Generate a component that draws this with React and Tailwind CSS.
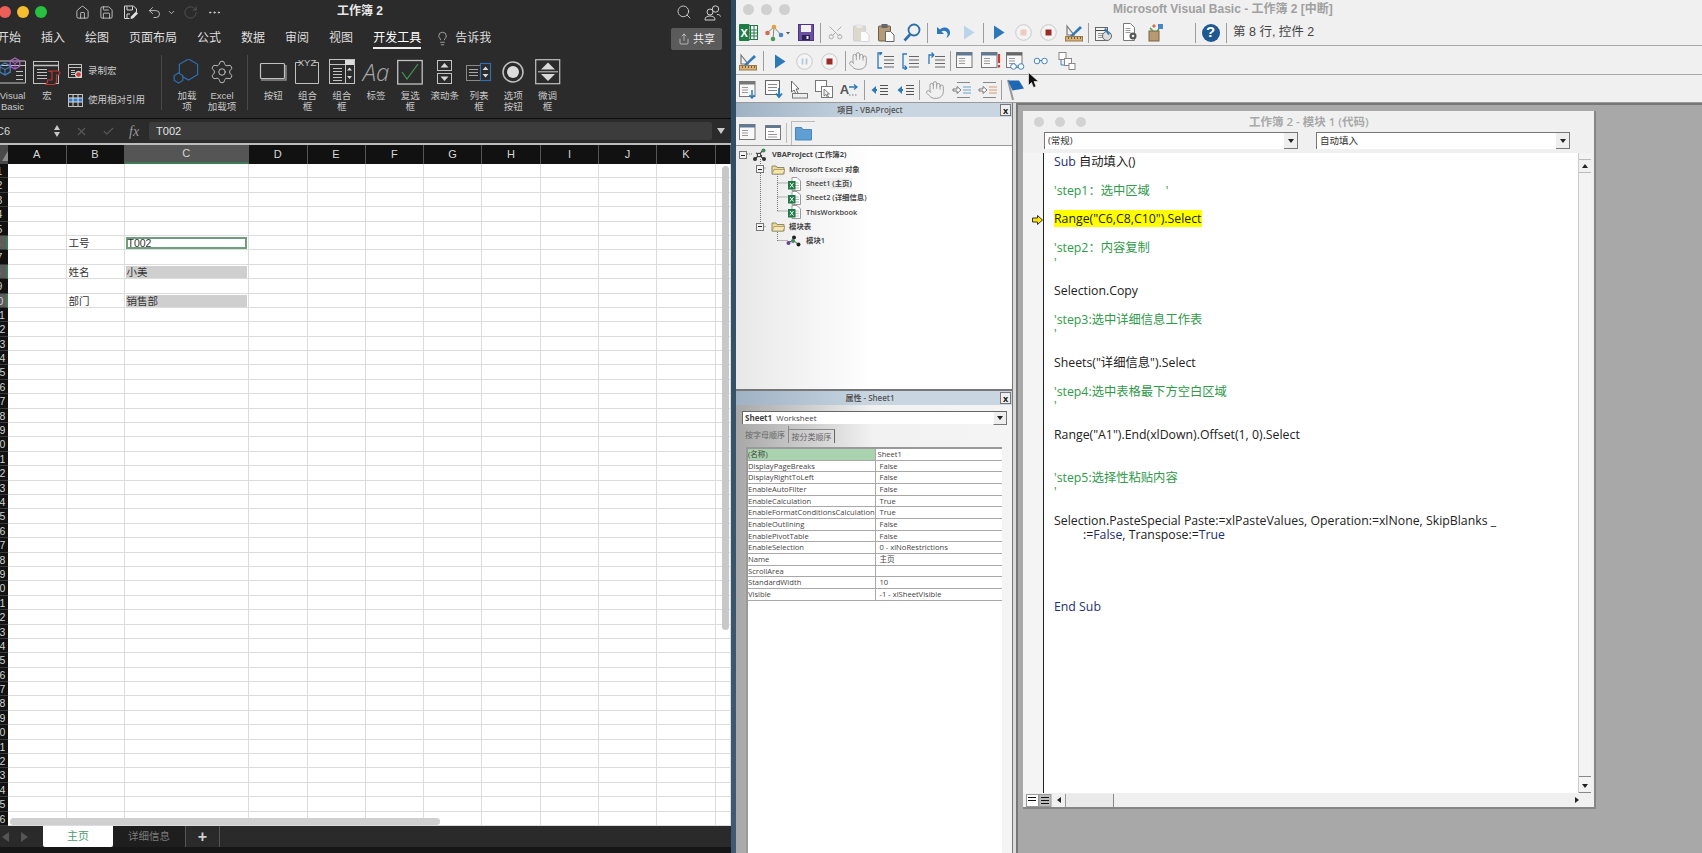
import React from "react";
import {
  Home,
  Save,
  Undo2,
  ChevronDown,
  RotateCw,
  Ellipsis,
  Search,
  Lightbulb,
  Share,
  X,
  Check,
  Settings,
  Scissors,
  Hand,
} from "lucide-react";

const sans = "font-['Liberation_Sans','Noto_Sans_CJK_SC',sans-serif]";
const ui = "font-['Open_Sans','Noto_Sans_CJK_SC',sans-serif]";

const Sv = ({ w, h, children, className }) => (
  <svg width={w} height={h} viewBox={`0 0 ${w} ${h}`} fill="none" className={className}>
    {children}
  </svg>
);

const hex = (cx, cy, r) =>
  [0, 1, 2, 3, 4, 5]
    .map((i) => {
      const a = (Math.PI / 3) * i - Math.PI / 2;
      return `${(cx + r * Math.cos(a)).toFixed(1)},${(cy + r * Math.sin(a)).toFixed(1)}`;
    })
    .join(" ");

const Lines = ({ x, y, w, n, gap, stroke = "#555" }) =>
  Array.from({ length: n }).map((_, i) => (
    <path key={i} d={`M${x} ${y + i * gap + 0.5}h${w}`} stroke={stroke} />
  ));

/* ribbon icons */
const line = "#c2c2c2";

const VbIcon = () => (
  <Sv w={27} h={26} className="overflow-visible">
    <path d="M0 2H25.5V24H0" stroke={line} />
    <path d="M0 6.5H25" stroke={line} />
    <Lines x={16} y={12} w={7} n={3} gap={4} stroke={line} />
    <polygon points={hex(5, 10, 6)} stroke="#3f86c7" strokeWidth="1.3" />
    <path d="M0 8l5 2.5 5-2.5M5 10.5V16" stroke="#3f86c7" />
    <polygon points={hex(15, 4.5, 5.5)} stroke="#b060c8" strokeWidth="1.3" />
    <path d="M10.5 2l4.5 2.5 4.5-2.5M15 4.5V10" stroke="#b060c8" />
  </Sv>
);

const MacroIcon = () => (
  <Sv w={30} h={26}>
    <rect x="1.5" y="2.5" width="25" height="22" stroke={line} />
    <path d="M2 6.5H26" stroke={line} strokeWidth="1.5" />
    <Lines x={5} y={10} w={10} n={4} gap={3} stroke={line} />
    <path d="M16 12h10.5l1.5 2-1.5 2h-2v7l-2 2.5H14l1.5-2.5v-2H20v-8z" fill="#2a2a2a" stroke="#c0342e" strokeWidth="1.2" />
  </Sv>
);

const RecordIcon = () => (
  <Sv w={15} h={15}>
    <rect x="0.5" y="0.5" width="13" height="13" stroke={line} />
    <path d="M1 3.5h12" stroke={line} />
    <Lines x={3} y={6} w={4} n={3} gap={2} stroke={line} />
    <circle cx="10.5" cy="10.5" r="3.5" fill="#d8d8d8" />
    <circle cx="10.5" cy="10.5" r="2.3" fill="#d03a32" />
  </Sv>
);

const RelIcon = () => (
  <Sv w={15} h={13}>
    <rect x="0.5" y="0.5" width="14" height="12" stroke={line} />
    <rect x="1" y="4" width="13" height="4" fill="#2f7fd0" />
    <path d="M5 1v11M10 1v11M1 4h13M1 8h13" stroke="#dcdcdc" />
  </Sv>
);

const AddinIcon = () => (
  <Sv w={28} h={26}>
    <polygon points={hex(15.5, 10.5, 10.5)} stroke="#2f6fb0" strokeWidth="1.2" />
    <polygon points={hex(5.5, 19, 5)} stroke="#2f6fb0" strokeWidth="1.2" fill="#2a2a2a" />
  </Sv>
);

const ButtonIcon = () => (
  <Sv w={28} h={20}>
    <rect x="1.5" y="1.5" width="24" height="15" rx="1" stroke={line} strokeWidth="1.2" />
    <path d="M2 18h25V3" stroke="#8a8a8a" strokeWidth="1.5" />
  </Sv>
);

const GroupIcon = () => (
  <Sv w={26} h={26}>
    <path d="M7 3.5H1.5V24.5H24.5V3.5H20" stroke={line} />
    <text x="13" y="7" textAnchor="middle" fontSize="9.5" fill={line} className={sans}>
      XYZ
    </text>
  </Sv>
);

const ComboIcon = () => (
  <Sv w={26} h={26}>
    <rect x="0.5" y="0.5" width="25" height="24" stroke={line} />
    <path d="M1 5.5h24" stroke={line} />
    <rect x="16" y="1" width="9" height="5" fill="#dcdcdc" />
    <Lines x={4} y={9} w={9} n={5} gap={3} stroke={line} />
    <path d="M16.5 6v18" stroke={line} />
    <path d="M18 11.5l2.5-3 2.5 3zM18 17l2.5 3 2.5-3z" fill="#d8d8d8" />
  </Sv>
);

const CheckIcon = () => (
  <Sv w={26} h={26}>
    <rect x="0.7" y="1.5" width="24.5" height="23.5" stroke={line} strokeWidth="1.3" />
    <path d="M5 13l5 7L21 5" stroke="#3f9a5a" strokeWidth="1.2" />
  </Sv>
);

const ScrollIcon = () => (
  <Sv w={16} h={26}>
    <rect x="0.5" y="1.5" width="14" height="10" stroke={line} />
    <path d="M3.5 8.5l4-4.5 4 4.5z" fill="#d8d8d8" />
    <rect x="0.5" y="14.5" width="14" height="10" stroke={line} />
    <path d="M3.5 17.5l4 4.5 4-4.5z" fill="#d8d8d8" />
  </Sv>
);

const ListIcon = () => (
  <Sv w={26} h={20}>
    <rect x="0.5" y="3.5" width="14" height="15" stroke="#8a8a8a" />
    <Lines x={3} y={7} w={9} n={3} gap={3} stroke="#a8a8a8" />
    <rect x="14.5" y="1.5" width="10" height="17" stroke="#2f6fb0" strokeWidth="1.2" />
    <path d="M16.5 8l3-3.5 3 3.5zM16.5 12l3 3.5 3-3.5z" fill="#d8d8d8" />
  </Sv>
);

const RadioIcon = () => (
  <Sv w={26} h={26}>
    <circle cx="13" cy="13" r="10" stroke={line} strokeWidth="1.5" />
    <circle cx="13" cy="13" r="6" fill="#dcdcdc" />
  </Sv>
);

const SpinIcon = () => (
  <Sv w={26} h={26}>
    <rect x="0.7" y="0.7" width="24" height="24" stroke={line} strokeWidth="1.2" />
    <path d="M6 10.5l7-7 7 7z" fill="#d8d8d8" />
    <path d="M6 15l7 7 7-7z" fill="#d8d8d8" />
    <path d="M3 12.7h20" stroke="#999" strokeWidth="1.5" />
  </Sv>
);

const People = () => (
  <Sv w={17} h={17}>
    <circle cx="11.5" cy="5" r="3.2" stroke="#cfcfcf" />
    <path d="M13 10.5c2 0 3.5.8 3.5 2" stroke="#cfcfcf" />
    <circle cx="6" cy="8" r="3" stroke="#cfcfcf" fill="#2b2b2b" />
    <path d="M1 16c0-3 2-4 5-4s5 1 5 4z" stroke="#cfcfcf" fill="#2b2b2b" />
  </Sv>
);

const SaveEdit = () => (
  <Sv w={15} h={15}>
    <path d="M1.5 1h9l3 3v3M1.5 1v12.5h5" stroke="#d8d8d8" />
    <path d="M4 1.5v3.5h5.5v-3.5M4 13v-4h3" stroke="#d8d8d8" />
    <path d="M7.5 14l.5-2.5 5-5 2 2-5 5z" fill="#e0e0e0" />
  </Sv>
);

const RibbonItem = ({ className, icon, children }) => (
  <div className={`flex shrink-0 flex-col items-center ${className}`}>
    <div className="flex h-[26px] items-center justify-center">{icon}</div>
    <div className="mt-[5px] whitespace-nowrap text-center text-[9.5px] leading-[11px] text-[#c8c8c8]">
      {children}
    </div>
  </div>
);

const colWidths = [
  "w-[58.5px]",
  "w-[58px]",
  "w-[124.5px]",
  "w-[58.5px]",
  "w-[58px]",
  "w-[58.5px]",
  "w-[58px]",
  "w-[59px]",
  "w-[58px]",
  "w-[58px]",
  "w-[59px]",
  "w-[15px]",
];
const letters = ["A", "B", "C", "D", "E", "F", "G", "H", "I", "J", "K", ""];
const rows = Array.from({ length: 46 }, (_, i) => i + 1);
const labels = { 6: "工号", 8: "姓名", 10: "部门" };
const values = { 8: "小美", 10: "销售部" };

const ExcelWindow = () => (
  <div className={`relative flex h-full w-[731px] shrink-0 flex-col overflow-hidden bg-[#2b2b2b] ${sans}`}>
    {/* title bar */}
    <div className="flex h-[24px] shrink-0 items-center">
      <div className="flex w-[230px] items-center text-[#d8d8d8]">
        <div className="ml-[-1px] flex gap-[6px]">
          <div className="h-[12px] w-[12px] rounded-full bg-[#ee5f57]" />
          <div className="h-[12px] w-[12px] rounded-full bg-[#f5bd2f]" />
          <div className="h-[12px] w-[12px] rounded-full bg-[#27c03f]" />
        </div>
        <Home size={15} strokeWidth={1.3} className="ml-[28px]" />
        <Save size={15} strokeWidth={1.3} className="ml-[9px]" />
        <div className="ml-[9px] flex"><SaveEdit /></div>
        <Undo2 size={15} strokeWidth={1.3} className="ml-[9px]" />
        <ChevronDown size={9} strokeWidth={2} className="ml-[5px]" />
        <RotateCw size={15} strokeWidth={1} className="ml-[7px] text-[#666]" />
        <Ellipsis size={15} strokeWidth={1.5} className="ml-[9px]" />
      </div>
      <div className="mt-[-2px] w-[260px] text-center text-[12px] font-bold text-[#e8e8e8]">工作簿 2</div>
      <div className="flex flex-1 items-center justify-end gap-[12px] pr-[10px] text-[#d8d8d8]">
        <Search size={16} strokeWidth={1.3} />
        <People />
      </div>
    </div>
    {/* tabs */}
    <div className="flex h-[30px] shrink-0 items-start pt-[6px] text-[12px] leading-[17px] text-[#dedede]">
      <div className="ml-[-3px] flex items-start gap-[20px]">
        <span>开始</span>
        <span>插入</span>
        <span>绘图</span>
        <span>页面布局</span>
        <span>公式</span>
        <span>数据</span>
        <span>审阅</span>
        <span>视图</span>
        <span className="border-b-2 border-[#eeeeee] text-white">开发工具</span>
      </div>
      <Lightbulb size={15} strokeWidth={1} className="ml-[14px] mt-[1px]" />
      <span className="ml-[5px]">告诉我</span>
      <div className="ml-auto mr-[9px] mt-[-2px] flex h-[22px] w-[51px] items-center justify-center gap-[3px] rounded-[2px] bg-[#5b5b5b] text-[11px] text-[#eeeeee]">
        <Share size={12} strokeWidth={1.2} />
        共享
      </div>
    </div>
    {/* ribbon */}
    <div className="flex h-[64px] shrink-0 items-start pt-[5px]">
      <RibbonItem className="w-[26px]" icon={<VbIcon />}>
        <span className="ml-[-1px] block">Visual<br />Basic</span>
      </RibbonItem>
      <RibbonItem className="w-[42px]" icon={<MacroIcon />}>宏</RibbonItem>
      <div className="flex w-[93px] shrink-0 flex-col text-[9.5px] text-[#c8c8c8]">
        <div className="mt-[4px] flex h-[16px] items-center gap-[5px]"><RecordIcon />录制宏</div>
        <div className="mt-[13px] flex h-[16px] items-center gap-[5px]"><RelIcon />使用相对引用</div>
      </div>
      <div className="mt-[-4px] h-[55px] w-px shrink-0 bg-[#484848]" />
      <RibbonItem className="ml-[5px] w-[40px]" icon={<AddinIcon />}>加载<br />项</RibbonItem>
      <RibbonItem
        className="w-[30px]"
        icon={<Settings size={26} strokeWidth={0.9} className="text-[#c2c2c2]" />}
      >
        Excel<br />加载项
      </RibbonItem>
      <div className="ml-[10px] mt-[-4px] h-[55px] w-px shrink-0 bg-[#484848]" />
      <div className="ml-[8px] flex">
        <RibbonItem className="w-[34.3px]" icon={<ButtonIcon />}>按钮</RibbonItem>
        <RibbonItem className="w-[34.3px]" icon={<GroupIcon />}>组合<br />框</RibbonItem>
        <RibbonItem className="w-[34.3px]" icon={<ComboIcon />}>组合<br />框</RibbonItem>
        <RibbonItem
          className="w-[34.3px]"
          icon={<span className={`text-[24px] font-light italic leading-none text-[#a8a8a8] ${ui}`}>Aa</span>}
        >
          标签
        </RibbonItem>
        <RibbonItem className="w-[34.3px]" icon={<CheckIcon />}>复选<br />框</RibbonItem>
        <RibbonItem className="w-[34.3px]" icon={<ScrollIcon />}>滚动条</RibbonItem>
        <RibbonItem className="w-[34.3px]" icon={<ListIcon />}>列表<br />框</RibbonItem>
        <RibbonItem className="w-[34.3px]" icon={<RadioIcon />}>选项<br />按钮</RibbonItem>
        <RibbonItem className="w-[34.3px]" icon={<SpinIcon />}>微调<br />框</RibbonItem>
      </div>
    </div>
    {/* formula bar */}
    <div className="flex h-[25px] shrink-0 items-center border-t border-[#0c0c0c] text-[#d8d8d8]">
      <span className="w-[52px] text-[11px]">
        <span className="ml-[-4px] block">C6</span>
      </span>
      <div className="flex w-[10px] flex-col items-center gap-[2px] text-[#c8c8c8]">
        <div className="h-0 w-0 border-x-[3.5px] border-b-[5px] border-x-transparent border-b-[#c8c8c8]" />
        <div className="h-0 w-0 border-x-[3.5px] border-t-[5px] border-x-transparent border-t-[#c8c8c8]" />
      </div>
      <X size={13} strokeWidth={2} className="ml-[13px] text-[#5a5a5a]" />
      <Check size={13} strokeWidth={2} className="ml-[14px] text-[#5a5a5a]" />
      <span className="ml-[14px] font-['Liberation_Serif',serif] text-[14px] italic text-[#9a9a9a]">fx</span>
      <div className="ml-[10px] flex h-[18px] w-[563px] items-center rounded-[2px] bg-[#3c3c3c] pl-[7px] text-[11px] text-[#e4e4e4]">
        T002
      </div>
      <div className="ml-[5px] h-0 w-0 border-x-[4px] border-t-[6px] border-x-transparent border-t-[#c8c8c8]" />
    </div>
    <div className="h-[2px] shrink-0 bg-[#bdbdbd]" />
    {/* column headers */}
    <div className="flex h-[19px] shrink-0 bg-[#111111]">
      <div className="relative w-[8px] shrink-0 bg-[#4a4a4a]">
        <div className="ml-[2px] mt-[6px] h-0 w-0 border-b-[10px] border-l-[6px] border-b-[#8a8a8a] border-l-transparent" />
      </div>
      {letters.map((l, i) => (
        <div
          key={i}
          className={`flex shrink-0 items-center justify-center border-r border-[#555] text-[11px] text-[#d8d8d8] ${colWidths[i]} ${
            l === "C" ? "border-b-2 border-b-[#3f7a58] bg-[#555555]" : ""
          }`}
        >
          {l}
        </div>
      ))}
    </div>
    {/* sheet */}
    <div className="relative h-[662px] shrink-0 overflow-hidden bg-white">
      {rows.map((r) => (
        <div key={r} className="flex h-[14.4px]">
          <div
            className={`flex w-[8px] shrink-0 justify-end overflow-hidden border-b border-[#3a3a3a] text-[10.5px] leading-[14px] text-[#d0d0d0] ${
              labels[r] ? "border-r-2 border-r-[#3f7a58] bg-[#5c5c5c]" : "bg-[#111111]"
            }`}
          >
            <span className="w-[17px] shrink-0 text-center">{r}</span>
          </div>
          {colWidths.map((w, i) => (
            <div
              key={i}
              className={`shrink-0 overflow-hidden border-b border-r border-[#dcdcdc] text-[10.5px] leading-[12px] text-[#333] ${w}`}
            >
              {i === 1 && labels[r] && <span className="ml-[2px] mt-[1.5px] block">{labels[r]}</span>}
              {i === 2 && r === 6 && (
                <div className="mx-[1px] mt-[1.5px] h-[12px] border-2 border-[#6f9d80] leading-[9px]">T002</div>
              )}
              {i === 2 && values[r] && (
                <div className="mx-[1px] mt-[1.5px] h-[12px] bg-[#cfcfcf] pl-[1px]">{values[r]}</div>
              )}
            </div>
          ))}
        </div>
      ))}
      <div className="absolute left-[722px] top-[2px] h-[464px] w-[7px] rounded-full bg-[#c8c8c8]" />
      <div className="absolute bottom-[1px] left-[10px] h-[7px] w-[430px] rounded-full bg-[#cfcfcf]" />
    </div>
    {/* sheet tabs */}
    <div className="flex h-[21px] shrink-0 items-center bg-[#2a2a2a]">
      <div className="ml-[2px] h-0 w-0 border-y-[5px] border-r-[7px] border-y-transparent border-r-[#555]" />
      <div className="ml-[12px] h-0 w-0 border-y-[5px] border-l-[7px] border-y-transparent border-l-[#555]" />
      <div className="ml-[15px] flex h-full w-[70px] items-center justify-center rounded-b-[2px] bg-white text-[11px] text-[#4f9a6c]">
        主页
      </div>
      <div className="flex h-full w-[73px] items-center justify-center border-r border-[#555] bg-[#1e1e1e] text-[10.5px] text-[#7c7c7c]">
        详细信息
      </div>
      <div className="flex h-full w-[34px] items-center justify-center border-r border-[#555] text-[16px] font-bold text-[#cfcfcf]">
        +
      </div>
    </div>
    <div className="flex-1 bg-[#161616]" />
  </div>
);

/* VBA toolbar icons */
const XlIcon = () => (
  <Sv w={19} h={17}>
    <rect x="8" y="1.5" width="10.5" height="14" fill="#fff" stroke="#1f7a45" />
    <path d="M11.5 2v13M15 2v13M8 6h10M8 9h10M8 12h10" stroke="#1f7a45" />
    <rect x="0" y="0" width="10.5" height="17" rx="1" fill="#1f7a45" />
    <text x="5.2" y="12.5" textAnchor="middle" fontSize="11" fontWeight="700" fill="#fff" className={sans}>
      X
    </text>
  </Sv>
);
const NodesIcon = () => (
  <Sv w={26} h={18}>
    <path d="M3 9l7-6 7 8M10 3l-1 12" stroke="#888" />
    <circle cx="3.5" cy="9" r="2.3" fill="#d9694f" />
    <circle cx="10" cy="3" r="2.3" fill="#e3a33a" />
    <circle cx="9" cy="15" r="2.3" fill="#4d9a58" />
    <circle cx="17" cy="11" r="2.3" fill="#4a86c4" />
    <path d="M22 8h4l-2 2.5z" fill="#555" />
  </Sv>
);
const FloppyIcon = () => (
  <Sv w={16} h={17}>
    <rect x="0.5" y="0.5" width="15" height="16" fill="#6a4fa3" stroke="#4b3580" />
    <rect x="3" y="1" width="10" height="7" fill="#f2f2f2" />
    <rect x="4" y="11" width="8" height="5" fill="#2d2250" />
    <rect x="8.5" y="12" width="2" height="3" fill="#eee" />
  </Sv>
);
const PasteIcon = ({ dim }) => (
  <Sv w={17} h={19}>
    <rect x="0.5" y="3" width="12" height="15" rx="1" fill={dim ? "#ddd8cd" : "#b49a78"} stroke={dim ? "#cfcfcf" : "#6f5f48"} />
    <rect x="3.5" y="1" width="6" height="4" fill={dim ? "#e8e8e8" : "#666"} />
    <path d="M7.5 8.5h5l3.5 3.5v6.5h-8.5z" fill="#fbfbfb" stroke={dim ? "#d8d8d8" : "#666"} />
  </Sv>
);
const FindIcon = () => (
  <Sv w={18} h={19}>
    <circle cx="11" cy="7" r="5.5" stroke="#2b6ea8" strokeWidth="1.8" />
    <path d="M7 11.5L1.5 17.5" stroke="#2b6ea8" strokeWidth="2.6" />
  </Sv>
);
const UndoIcon = () => (
  <Sv w={17} h={15}>
    <path d="M2 2v7h7l-2.5-2.5c2-1.5 5-1 6 2 .3 1.2 0 3-1.5 4.5 3-1 4.5-3.5 4-6C14.5 2.5 9 1 5 4.5z" fill="#2d78b8" />
  </Sv>
);
const Tri = ({ color }) => (
  <Sv w={12} h={15}>
    <path d="M1 0.5l10.5 7-10.5 7z" fill={color} />
  </Sv>
);
const Circle = ({ children }) => (
  <Sv w={17} h={17}>
    <circle cx="8.5" cy="8.5" r="7.8" fill="#f4f4f4" stroke="#c8c8c8" />
    {children}
  </Sv>
);
const DesignIcon = () => (
  <Sv w={19} h={19}>
    <path d="M2 3l7 9H2z" fill="none" stroke="#777" strokeWidth="1.2" />
    <path d="M5 13L15 3l2 2L7 14z" fill="#2d78b8" />
    <rect x="0.5" y="13.5" width="17" height="4.5" fill="#d9b27a" stroke="#9a7b4c" />
    <path d="M3.5 14v2M6.5 14v2M9.5 14v2M12.5 14v2M15.5 14v2" stroke="#7a5e36" />
  </Sv>
);
const WizardIcon = () => (
  <Sv w={18} h={18}>
    <rect x="0.5" y="3.5" width="12" height="13" fill="#f4f4f4" stroke="#666" />
    <path d="M1 6.5h11" stroke="#444" />
    <Lines x={3} y={9} w={6} n={3} gap={2} stroke="#999" />
    <circle cx="12" cy="12" r="4.5" fill="#ddd" stroke="#666" />
    <path d="M10 4.5l4 6" stroke="#2d78b8" strokeWidth="2" />
  </Sv>
);
const GearDocIcon = () => (
  <Sv w={17} h={19}>
    <path d="M1.5 0.5h7l4 4v13h-11z" fill="#fff" stroke="#777" />
    <Lines x={3.5} y={5} w={5} n={3} gap={2} stroke="#999" />
    <circle cx="11" cy="13" r="3.5" fill="#555" />
    <circle cx="11" cy="13" r="1.3" fill="#eee" />
  </Sv>
);
const ToolboxIcon = () => (
  <Sv w={18} h={19}>
    <rect x="2" y="8" width="10" height="10" fill="#b59a72" stroke="#7a6543" />
    <path d="M7 1l2 2-2 2-2-2z" fill="#d9694f" />
    <rect x="11" y="1" width="5" height="5" fill="#4a86c4" />
    <path d="M3 5l3 3M12 6l-2 2" stroke="#4d9a58" strokeWidth="1.5" />
  </Sv>
);
const HelpIcon = () => (
  <div className="flex h-[18px] w-[18px] items-center justify-center rounded-full bg-[#20598f] font-['Liberation_Sans',sans-serif] text-[15px] font-bold text-white">
    ?
  </div>
);
const Stop = ({ color }) => (
  <Circle>
    <rect x="5.5" y="5.5" width="6" height="6" fill={color} />
  </Circle>
);
const StepIcon = ({ d }) => (
  <Sv w={19} h={18}>
    <Lines x={8} y={4} w={10} n={4} gap={3.5} stroke="#666" />
    <path d={d} stroke="#2d78b8" strokeWidth="1.3" />
  </Sv>
);
const WinIcon = ({ extra, title = "#5a7a98" }) => (
  <Sv w={20} h={18}>
    <rect x="0.5" y="0.5" width="15.5" height="15" fill="#f8f8f8" stroke="#777" />
    <rect x="1" y="1" width="15" height="2.5" fill={title} />
    <Lines x={3} y={6} w={6} n={3} gap={2.5} stroke="#999" />
    {extra}
  </Sv>
);
const Glasses = ({ x = 0, y = 0, c = "#3f86c0" }) => (
  <g transform={`translate(${x} ${y})`}>
    <circle cx="3.5" cy="3.5" r="2.8" fill="#fff" stroke={c} />
    <circle cx="11" cy="3.5" r="2.8" fill="#fff" stroke={c} />
    <path d="M6 3h2.5" stroke={c} />
  </g>
);
const StackIcon = () => (
  <Sv w={18} h={18}>
    <rect x="1" y="0.5" width="7" height="7" fill="#fff" stroke="#888" />
    <rect x="6.5" y="6.5" width="7" height="7" fill="#fff" stroke="#888" />
    <rect x="11" y="11.5" width="6" height="6" fill="#fff" stroke="#888" />
    <path d="M3 8v5h3" stroke="#3f86c0" />
  </Sv>
);
const DocArrow = () => (
  <Sv w={19} h={19}>
    <rect x="0.5" y="0.5" width="14" height="14" fill="#fafafa" stroke="#666" />
    <Lines x={3} y={4} w={9} n={3} gap={3} stroke="#888" />
    <path d="M14 8v8M11 13.5l3 3.5 3-3.5" stroke="#2d78b8" strokeWidth="1.8" />
  </Sv>
);
const ArrowBox = () => (
  <Sv w={19} h={19}>
    <path d="M1.5 1v11l2.5-2 2 4 2-1-2-4h3z" fill="#fff" stroke="#666" />
    <rect x="2.5" y="13.5" width="15" height="4.5" fill="#eee" stroke="#777" />
  </Sv>
);
const TwoDocs = () => (
  <Sv w={19} h={19}>
    <rect x="0.5" y="0.5" width="11" height="11" fill="#fff" stroke="#777" />
    <rect x="6.5" y="6.5" width="11" height="11" fill="#fff" stroke="#777" />
    <path d="M9 9v7l2-1.5 1.5 3 1-.5-1.5-3h2.5z" fill="#eee" stroke="#555" strokeWidth="0.7" />
  </Sv>
);
const WordIcon = () => (
  <div className="flex items-center">
    <span className={`text-[13px] font-semibold leading-none text-[#555] ${sans}`}>A</span>
    <Sv w={10} h={14}>
      <path d="M0 4h7M5 1.5L8 4 5 6.5" stroke="#2d78b8" strokeWidth="1.3" />
      <path d="M0 12h9" stroke="#777" strokeDasharray="1.5 1.5" />
    </Sv>
  </div>
);
const IndentIcon = () => (
  <Sv w={17} h={14}>
    <Lines x={9} y={2} w={8} n={4} gap={3} stroke="#555" />
    <path d="M2 7h4" stroke="#2d78b8" strokeWidth="2" />
    <path d="M0.5 7L5 3v8z" fill="#2d78b8" />
  </Sv>
);
const CommentIcon = ({ c = "#6ea2d4" }) => (
  <Sv w={20} h={20}>
    <Lines x={5} y={2} w={13} n={1} gap={3} stroke="#888" />
    <path d="M1 9h4V6.5L9 10l-4 3.5V11H1z" fill="#fff" stroke="#777" />
    <path d="M11 7h8M11 10h8M11 13h8" stroke={c} />
    <Lines x={5} y={17} w={13} n={1} gap={3} stroke="#888" />
  </Sv>
);
const FlagIcon = () => (
  <Sv w={18} h={22}>
    <path d="M1 1l5 20" stroke="#999" strokeWidth="2" />
    <path d="M1 1.5h11l5 8-11.5 2z" fill="#1d68b4" />
  </Sv>
);

const Tool = ({ className, children }) => (
  <div className={`flex h-full shrink-0 items-center justify-center ${className}`}>{children}</div>
);
const Sep = ({ className }) => (
  <div className={`flex h-full shrink-0 items-center justify-center ${className}`}>
    <div className="h-[20px] w-px bg-[#9d9d9d]" />
  </div>
);
const HandTool = () => <Hand size={20} strokeWidth={1} className="text-[#8f8f8f]" />;

const Toolbars = () => (
  <div className="relative shrink-0">
    <div className="flex h-[28px] items-center border-b border-[#a9a9a9] pt-[2px]">
      <Tool className="w-[25px]"><XlIcon /></Tool>
      <Tool className="w-[32px]"><NodesIcon /></Tool>
      <Tool className="w-[25px]"><FloppyIcon /></Tool>
      <Sep className="w-[5px]" />
      <Tool className="w-[25px]"><Scissors size={17} strokeWidth={1.3} className="-rotate-90 text-[#a9a9a9]" /></Tool>
      <Tool className="w-[26px]"><PasteIcon dim /></Tool>
      <Tool className="w-[25px]"><PasteIcon /></Tool>
      <Tool className="w-[26px]"><FindIcon /></Tool>
      <Sep className="w-[4px]" />
      <Tool className="w-[28px]"><UndoIcon /></Tool>
      <Tool className="w-[23px]"><Tri color="#bcd4ea" /></Tool>
      <Sep className="w-[6px]" />
      <Tool className="w-[25px]"><Tri color="#2d78b8" /></Tool>
      <Tool className="w-[25px]"><Stop color="#eec9c4" /></Tool>
      <Tool className="w-[25px]"><Stop color="#9c2a26" /></Tool>
      <Tool className="w-[26px]"><DesignIcon /></Tool>
      <Sep className="w-[3px]" />
      <Tool className="w-[27px]"><WizardIcon /></Tool>
      <Tool className="w-[26px]"><GearDocIcon /></Tool>
      <Tool className="w-[25px]"><ToolboxIcon /></Tool>
      <Tool className="w-[25px]" />
      <Sep className="w-[4px]" />
      <Tool className="w-[27px]"><HelpIcon /></Tool>
      <Sep className="w-[4px]" />
      <span className={`ml-[5px] text-[12.5px] text-[#444] ${sans}`}>第 8 行, 控件 2</span>
    </div>
    <div className="flex h-[29px] items-center border-b border-[#a9a9a9] pt-[2px]">
      <Tool className="w-[25px]"><DesignIcon /></Tool>
      <Sep className="w-[5px]" />
      <Tool className="w-[27px]"><Tri color="#2d78b8" /></Tool>
      <Tool className="w-[22px]">
        <Circle><path d="M6.5 5.5v6M10.5 5.5v6" stroke="#b4c8dc" strokeWidth="1.8" /></Circle>
      </Tool>
      <Tool className="w-[28px]"><Stop color="#9c2a26" /></Tool>
      <Sep className="w-[4px]" />
      <Tool className="w-[22px]"><HandTool /></Tool>
      <Tool className="ml-[3px] w-[26px]"><StepIcon d="M6 1H2v15h4M6 1L3.5 3M6 1L3.5 -1" /></Tool>
      <Tool className="w-[24px]"><StepIcon d="M6 2H2v14h4M6 16l-2.5-2.5M6 16l-2.5 2" /></Tool>
      <Tool className="ml-[1px] w-[26px]"><StepIcon d="M2 12V3h5M7 3L4.5 0.5M7 3L4.5 5.5" /></Tool>
      <Sep className="w-[2px]" />
      <Tool className="w-[29px]"><WinIcon /></Tool>
      <Tool className="w-[22px]">
        <WinIcon extra={<path d="M18 2v9M18 13v2.5" stroke="#d03a32" strokeWidth="2.2" />} />
      </Tool>
      <Tool className="w-[28px]">
        <WinIcon title="#666" extra={<Glasses x={4} y={11} />} />
      </Tool>
      <Tool className="w-[21px]">
        <Sv w={16} h={8}><Glasses x={0.5} y={0.5} /></Sv>
      </Tool>
      <Tool className="w-[31px]"><StackIcon /></Tool>
    </div>
    <div className="flex h-[28px] items-center border-b border-[#9a9a9a] pt-[2px]">
      <Tool className="w-[25px]"><WinIcon title="#777" extra={<path d="M13 9v8M10.5 14l2.5 3 2.5-3" stroke="#2d78b8" strokeWidth="1.5" />} /></Tool>
      <Tool className="w-[26px]"><DocArrow /></Tool>
      <Tool className="w-[25px]"><ArrowBox /></Tool>
      <Tool className="w-[25px]"><TwoDocs /></Tool>
      <Tool className="w-[25px]"><WordIcon /></Tool>
      <Sep className="w-[4px]" />
      <Tool className="w-[27px]"><IndentIcon /></Tool>
      <Tool className="w-[25px]"><IndentIcon /></Tool>
      <Sep className="w-[3px]" />
      <Tool className="w-[28px]"><HandTool /></Tool>
      <Tool className="w-[26px]"><CommentIcon /></Tool>
      <Tool className="w-[25px]"><CommentIcon c="#d99a6e" /></Tool>
      <Sep className="w-[3px]" />
      <Tool className="w-[25px]"><FlagIcon /></Tool>
    </div>
    {/* mouse pointer */}
    <svg width="11" height="17" viewBox="0 0 11 17" className="absolute left-[292px] top-[54px]">
      <path d="M0.5 0.5v13l3-3 2 5 2.5-1-2-5h4.5z" fill="#111" stroke="#fff" strokeWidth="0.6" />
    </svg>
  </div>
);

/* project tree */
const Box = () => (
  <div className="flex h-[8px] w-[8px] shrink-0 items-center justify-center border border-[#777] bg-[#f2f2f2]">
    <div className="h-px w-[4px] bg-[#222]" />
  </div>
);
const FolderIcon = () => (
  <Sv w={14} h={11}>
    <path d="M1 10V2h4l1 1.5h7V10z" fill="#f0d98a" stroke="#8a8a70" />
    <path d="M1 10l2-4.5h11L12 10z" fill="#f7e7a8" stroke="#8a8a70" strokeWidth="0.7" />
  </Sv>
);
const SheetIcon = () => (
  <Sv w={13} h={14}>
    <path d="M4 0.5h5l3.5 3.5v9.5H4z" fill="#fff" stroke="#999" />
    <path d="M6 6h5M6 8.5h5M6 11h5" stroke="#bbb" />
    <rect x="0" y="4" width="7.5" height="8.5" fill="#1f7a45" />
    <path d="M2 6l3.5 4.5M5.5 6L2 10.5" stroke="#fff" />
  </Sv>
);
const ModuleIcon = () => (
  <Sv w={15} h={12}>
    <path d="M2 8l5-3 6 5M7 5l1-3" stroke="#555" />
    <circle cx="2.5" cy="8" r="2" fill="#6a3d9a" />
    <circle cx="8" cy="2.5" r="2" fill="#222" />
    <circle cx="7" cy="6" r="2" fill="#3d8a58" />
    <circle cx="12.5" cy="9.5" r="2" fill="#222" />
  </Sv>
);
const RootIcon = () => (
  <Sv w={16} h={14}>
    <path d="M2 12l5-5 6 5M7 7l4-5M4 5l6 3" stroke="#333" strokeWidth="1.2" />
    <circle cx="3" cy="11" r="2" fill="#333" />
    <circle cx="12" cy="11" r="2" fill="#333" />
    <circle cx="11.5" cy="2.5" r="2" fill="#3d8a58" />
    <circle cx="7" cy="7" r="1.8" fill="#eee" stroke="#333" />
  </Sv>
);

const TreeRow = ({ className, children }) => (
  <div className={`flex h-[14.3px] items-center whitespace-nowrap text-[7.4px] font-semibold leading-none text-[#444] ${className}`}>
    {children}
  </div>
);

const PanelTitle = ({ children }) => (
  <div className="flex h-[14px] shrink-0 items-center bg-linear-to-r from-[#9fb2c4] via-[#c9d6e2] to-[#c9d6e2] text-[8px] font-semibold text-[#555]">
    <span className="flex-1 pl-[4px] text-center">{children}</span>
    <div className="mr-[1px] flex h-[12px] w-[11px] items-center justify-center border border-[#777] bg-[#eee] text-[9px] font-bold leading-none text-[#222]">
      x
    </div>
  </div>
);

const Arrow = () => (
  <div className="flex h-[13px] w-[14px] shrink-0 items-center justify-center border-b border-l border-r border-[#777] border-l-[#fff] bg-[#eeeeee]">
    <div className="h-0 w-0 border-x-[3px] border-t-[4px] border-x-transparent border-t-[#222]" />
  </div>
);

const ProjectPanel = () => (
  <div className="flex h-[288px] shrink-0 flex-col border-b-2 border-[#777]">
    <PanelTitle>项目 - VBAProject</PanelTitle>
    <div className="flex h-[29px] shrink-0 items-center border-b border-[#999] bg-[#f0f0f0] pt-[3px]">
      <div className="flex w-[25px] justify-center pl-[1px]">
        <WinIcon />
      </div>
      <div className="flex w-[25px] justify-center">
        <Sv w={17} h={15}>
          <rect x="0.5" y="0.5" width="15" height="14" fill="#fff" stroke="#777" />
          <rect x="1" y="1" width="14" height="2" fill="#5a7a98" />
          <path d="M3 6.5h6M3 9.5h9M3 12h9" stroke="#999" />
        </Sv>
      </div>
      <div className="h-[20px] w-px bg-[#bbb]" />
      <div className="ml-[4px] flex h-[24px] w-[24px] items-center justify-center border-l border-t border-[#bbb]">
        <Sv w={17} h={15}>
          <path d="M0.5 14V1.5h6l1.5 2h8.5V14z" fill="#5f9fd4" stroke="#4a86bb" />
        </Sv>
      </div>
    </div>
    <div className="relative flex-1 bg-linear-to-r from-[#e8e8e8] via-white to-white pt-[2px]">
      <svg width="60" height="100" viewBox="0 0 60 100" className="absolute left-0 top-0" fill="none">
        <path d="M24.5 13v68M41.5 22v44M24.5 22H30M24.5 80.5H30M41.5 37H52M41.5 51H52M41.5 65H52M41.5 80v15M41.5 94.5H52M11 8h5" stroke="#777" strokeDasharray="1 1" />
      </svg>
      <TreeRow className="relative pl-[3px] text-[#222]">
        <Box />
        <span className="ml-[5px] flex w-[16px]"><RootIcon /></span>
        <span className="ml-[4px] font-bold">VBAProject (工作簿2)</span>
      </TreeRow>
      <TreeRow className="relative pl-[20px]">
        <Box />
        <span className="ml-[7px] flex"><FolderIcon /></span>
        <span className="ml-[4px]">Microsoft Excel 对象</span>
      </TreeRow>
      <TreeRow className="relative pl-[52px]">
        <SheetIcon />
        <span className="ml-[5px] bg-[#ededed] py-[2px]">Sheet1 (主页)</span>
      </TreeRow>
      <TreeRow className="relative pl-[52px]">
        <SheetIcon />
        <span className="ml-[5px]">Sheet2 (详细信息)</span>
      </TreeRow>
      <TreeRow className="relative pl-[52px]">
        <SheetIcon />
        <span className="ml-[5px]">ThisWorkbook</span>
      </TreeRow>
      <TreeRow className="relative pl-[20px]">
        <Box />
        <span className="ml-[7px] flex"><FolderIcon /></span>
        <span className="ml-[4px]">模块表</span>
      </TreeRow>
      <TreeRow className="relative pl-[50px]">
        <ModuleIcon />
        <span className="ml-[5px]">模块1</span>
      </TreeRow>
    </div>
  </div>
);

const props = [
  ["DisplayPageBreaks", "False"],
  ["DisplayRightToLeft", "False"],
  ["EnableAutoFilter", "False"],
  ["EnableCalculation", "True"],
  ["EnableFormatConditionsCalculation", "True"],
  ["EnableOutlining", "False"],
  ["EnablePivotTable", "False"],
  ["EnableSelection", "0 - xlNoRestrictions"],
  ["Name", "主页"],
  ["ScrollArea", ""],
  ["StandardWidth", "10"],
  ["Visible", "-1 - xlSheetVisible"],
];

const PropRow = ({ name, value }) => (
  <div className="flex h-[11.67px] border-b border-[#a8a8a8] text-[7.6px] leading-[10.5px] text-[#444]">
    <div className="w-[127.5px] shrink-0 overflow-hidden whitespace-nowrap border-r border-[#a8a8a8]">{name}</div>
    <div className="flex-1 pl-[4px]">{value}</div>
  </div>
);

const PropsPanel = () => (
  <div className="flex min-h-0 flex-1 flex-col">
    <PanelTitle>属性 - Sheet1</PanelTitle>
    <div className="flex min-h-0 flex-1 flex-col bg-linear-to-r from-[#a8a8a8] via-[#f2f2f2] to-[#f4f4f4] pl-[6px] pr-[5px]">
      <div className="mt-[6px] flex h-[13px] shrink-0 items-center justify-between border-l border-t border-[#666] bg-white pl-[2px] text-[8px] text-[#444]">
        <span>
          <b>Sheet1</b>&nbsp; Worksheet
        </span>
        <Arrow />
      </div>
      <div className="mt-[2px] flex h-[17px] shrink-0 items-end text-[8px] text-[#666]">
        <div className="flex h-[17px] w-[47px] items-center justify-center border-r border-[#888]">按字母顺序</div>
        <div className="flex h-[14px] w-[46px] items-center justify-center border-r border-t border-[#888] border-r-[#666]">按分类顺序</div>
      </div>
      <div className="ml-[4px] mr-[5px] mt-[4px] min-h-0 flex-1 border-l-2 border-t-2 border-[#9a9a9a] bg-white">
        <div className="flex h-[11.67px] border-b border-[#a8a8a8] text-[7.6px] leading-[10.5px] text-[#444]">
          <div className="w-[127.5px] shrink-0 border-r border-[#a8a8a8] bg-[#a9d3ae]">(名称)</div>
          <div className="flex-1 pl-[2px]">Sheet1</div>
        </div>
        {props.map(([n, v]) => (
          <PropRow key={n} name={n} value={v} />
        ))}
      </div>
    </div>
  </div>
);

/* code */
const navy = "text-[#1d2f6f]";
const green = "text-[#2f9a4a]";

const code = [
  <><span className={navy}>Sub</span> 自动填入()</>,
  "",
  <span className={green}>'step1：选中区域     '</span>,
  "",
  <span className="bg-[#ffff00]">Range("C6,C8,C10").Select</span>,
  "",
  <span className={green}>'step2：内容复制</span>,
  <span className={green}>'</span>,
  "",
  "Selection.Copy",
  "",
  <span className={green}>'step3:选中详细信息工作表</span>,
  <span className={green}>'</span>,
  "",
  'Sheets("详细信息").Select',
  "",
  <span className={green}>'step4:选中表格最下方空白区域</span>,
  <span className={green}>'</span>,
  "",
  'Range("A1").End(xlDown).Offset(1, 0).Select',
  "",
  "",
  <span className={green}>'step5:选择性粘贴内容</span>,
  <span className={green}>'</span>,
  "",
  "Selection.PasteSpecial Paste:=xlPasteValues, Operation:=xlNone, SkipBlanks _",
  <span className="pl-[29px]">:=<span className={navy}>False</span>, Transpose:=<span className={navy}>True</span></span>,
  "",
  "",
  "",
  "",
  <span className={navy}>End Sub</span>,
];

const Combo = ({ className, children }) => (
  <div className={`flex h-[17px] shrink-0 items-center justify-between border-l border-t border-[#777] bg-white pl-[3px] text-[9.5px] text-[#333] ${className}`}>
    {children}
    <div className="flex h-[16px] w-[14px] items-center justify-center border-b border-r border-[#777] bg-[#eeeeee]">
      <div className="h-0 w-0 border-x-[3px] border-t-[4px] border-x-transparent border-t-[#222]" />
    </div>
  </div>
);

const CodeWindow = () => (
  <div className="ml-[5px] mt-[6px] flex h-[698px] w-[573px] flex-col border-b-2 border-r-2 border-[#868686] bg-[#f0f0f0]">
    <div className="flex h-[21px] shrink-0 items-center">
      <div className="ml-[11px] flex gap-[11px]">
        <div className="h-[10px] w-[10px] rounded-full bg-[#d2d2d2]" />
        <div className="h-[10px] w-[10px] rounded-full bg-[#d2d2d2]" />
        <div className="h-[10px] w-[10px] rounded-full bg-[#d2d2d2]" />
      </div>
      <span className="ml-[163px] text-[11.5px] font-semibold text-[#a8a8a8]">工作簿 2 - 模块 1 (代码)</span>
    </div>
    <div className="flex shrink-0 gap-[18px] pl-[21px]">
      <Combo className="w-[254px]">(常规)</Combo>
      <Combo className="w-[254px]">自动填入</Combo>
    </div>
    <div className="mt-[4px] flex min-h-0 flex-1">
      <div className="w-[21px] shrink-0 border-r border-[#222] bg-[#f4f4f4] pl-[9px] pt-[62px]">
        <svg width="11" height="10" viewBox="0 0 11 10" className="block">
          <path d="M0.5 3h5V0.5L10.5 5l-5 4.5V7h-5z" fill="#ffe600" stroke="#333" />
        </svg>
      </div>
      <div className={`min-w-0 flex-1 bg-white pl-[10px] pt-[2px] text-[12.3px] leading-[14.37px] text-[#222] ${ui}`}>
        {code.map((c, i) => (
          <div key={i} className="h-[14.37px] whitespace-pre">
            {c}
          </div>
        ))}
      </div>
      <div className="flex w-[13px] shrink-0 flex-col border-l border-[#ccc] bg-[#f3f3f3]">
        <div className="mt-[6px] flex h-[14px] items-center justify-center border-b border-t border-[#bbb] bg-[#f0f0f0]">
          <div className="h-0 w-0 border-x-[3px] border-b-[4px] border-x-transparent border-b-[#222]" />
        </div>
        <div className="flex-1 border-b border-[#888]" />
        <div className="mt-[2px] flex h-[14px] items-center justify-center border-b border-[#888]">
          <div className="h-0 w-0 border-x-[3px] border-t-[4px] border-x-transparent border-t-[#222]" />
        </div>
      </div>
      <div className="w-[3px] shrink-0" />
    </div>
    <div className="flex h-[14px] shrink-0 items-center pl-[3px] pr-[15px]">
      <Sv w={26} h={13}>
        <rect x="0.5" y="0.5" width="12" height="12" fill="#fff" stroke="#999" />
        <path d="M2 3.5h8M2 6.5h8" stroke="#111" />
        <rect x="13" y="0.5" width="12" height="12" fill="#bbb" stroke="#999" />
        <path d="M15 3.5h8M15 6.5h8M15 9.5h8" stroke="#111" />
      </Sv>
      <div className="flex h-[13px] w-[14px] items-center justify-center border-r border-[#999]">
        <div className="h-0 w-0 border-y-[3px] border-r-[4px] border-y-transparent border-r-[#222]" />
      </div>
      <div className="h-[13px] w-[48px] border-r border-[#888] bg-[#eaeaea]" />
      <div className="flex-1" />
      <div className="flex h-[13px] w-[7px] items-center justify-end">
        <div className="h-0 w-0 border-y-[3px] border-l-[4px] border-y-transparent border-l-[#222]" />
      </div>
    </div>
  </div>
);

const VbaWindow = () => (
  <div className={`flex h-full min-w-0 flex-1 flex-col bg-[#f0f0f0] ${ui}`}>
    <div className="flex h-[18px] shrink-0 items-center">
      <div className="ml-[7px] flex gap-[7px]">
        <div className="h-[11px] w-[11px] rounded-full bg-[#d0d0d0]" />
        <div className="h-[11px] w-[11px] rounded-full bg-[#d0d0d0]" />
        <div className="h-[11px] w-[11px] rounded-full bg-[#d0d0d0]" />
      </div>
      <span className={`ml-[323px] whitespace-nowrap text-[12px] font-bold text-[#a0a0a0] ${sans}`}>
        Microsoft Visual Basic - 工作簿 2 [中断]
      </span>
    </div>
    <Toolbars />
    <div className="flex min-h-0 flex-1">
      <div className="flex h-full w-[277px] shrink-0 flex-col border-r border-[#777]">
        <ProjectPanel />
        <PropsPanel />
      </div>
      <div className="w-[3px] shrink-0 bg-[#dcdcdc]" />
      <div className="min-w-0 flex-1 border-l-2 border-t-2 border-[#777] bg-[#a8a8a8]">
        <CodeWindow />
      </div>
    </div>
  </div>
);

export default function App() {
  return (
    <div className="flex h-[853px] w-[1702px] overflow-hidden bg-[#a8a8a8]">
      <ExcelWindow />
      <div className="h-full w-[5px] shrink-0 bg-linear-to-b from-[#2f4a63] to-[#3f5a72]" />
      <VbaWindow />
    </div>
  );
}
